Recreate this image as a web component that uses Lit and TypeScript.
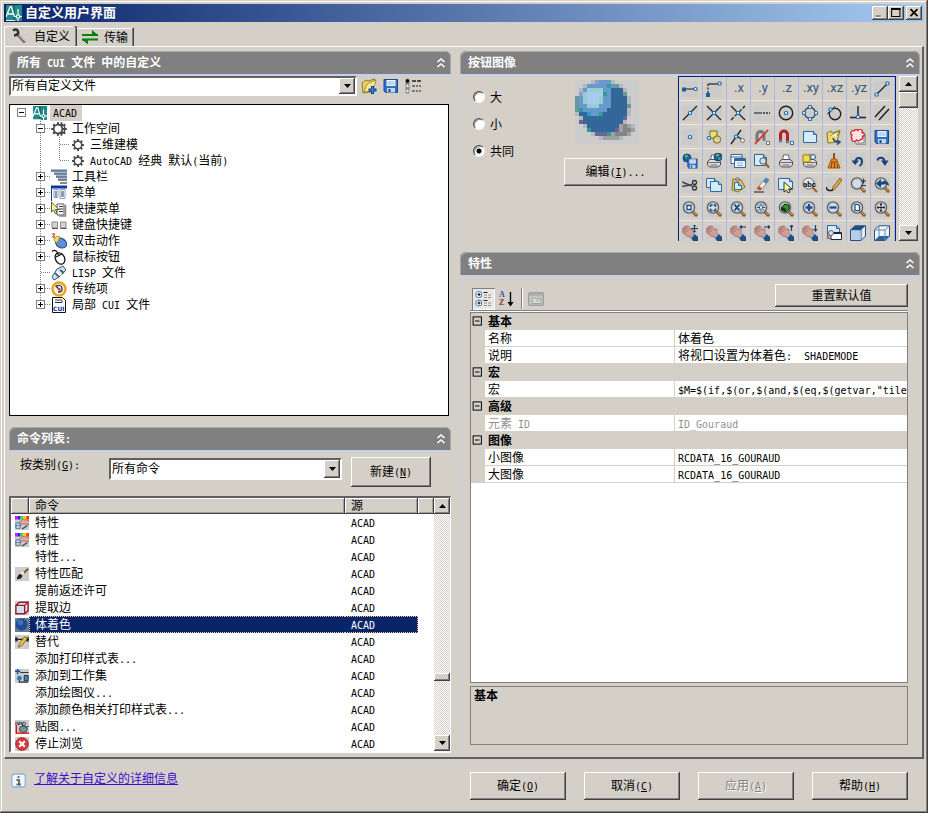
import { LitElement, html, svg, css, nothing } from "lit";
import { customElement, state } from "lit/decorators.js";
import { classMap } from "lit/directives/class-map.js";
import { styleMap } from "lit/directives/style-map.js";

/* ---------- text: Latin runs are set in a half-width monospace face ---------- */
const t = (s: string) =>
  html`<span class="t">${s.split(/([\x20-\x7e]+)/).map((p, i) => (i % 2 ? html`<span class="a">${p}</span>` : p))}</span>`;
const accel = (s: string, key: string, tail = "") =>
  html`<span class="t">${s}<span class="a">(<u>${key}</u>)${tail}</span></span>`;

/* ---------- icons ---------- */
const icon = (body: unknown, w = 16, cls = "") =>
  html`<svg class="ico ${cls}" width=${w} height=${w} viewBox="0 0 16 16" fill="none" aria-hidden="true">${body}</svg>`;

const node = (x: number, y: number) =>
  svg`<rect x=${x - 1.5} y=${y - 1.5} width="3" height="3" rx="1" fill="#fff" stroke="#1f6fb5" stroke-width="1.2"/>`;
const line = (d: string, c = "#222", w = 1.3, dash = "none") =>
  svg`<path d=${d} stroke=${c} stroke-width=${w} stroke-dasharray=${dash}/>`;
const sheet = (x: number, y: number, w: number, h: number) =>
  svg`<path d="M${x} ${y}h${w - 3}l3 3v${h - 3}h${-w}z" fill="#d4ecf8" stroke="#336699"/><path d="M${x + w - 3} ${y}v3h3" stroke="#336699" fill="#8fc4dd"/>`;
const lens = (body: unknown) => svg`
  <path d="M10.5 10.5L15 15" stroke="#6b3a10" stroke-width="2.6"/><path d="M10.3 10L14.6 14.3" stroke="#e0a050" stroke-width="1.2"/>
  <circle cx="7" cy="6.5" r="5.6" fill="#d3dbe4" stroke="#5a5a5a" stroke-width="1.3"/>
  <circle cx="7" cy="6.5" r="4.4" stroke="#aebccb" stroke-width=".8"/>${body}`;
const hand = (arrow: string) => svg`
  <path d="M1.5 7L6 10.5M1.2 4.5L7 9M3 2.5L8 7.5M5.5 2L10 7.5M10 5v4" stroke="#8e5a56" stroke-width="2.6" stroke-linecap="round"/>
  <ellipse cx="8" cy="9" rx="4" ry="2.8" transform="rotate(40 8 9)" fill="#cf9a90" stroke="#8e5a56" stroke-width=".6"/>
  <path d="M1.5 7L6 10.5M1.2 4.5L7 9M3 2.5L8 7.5M5.5 2L10 7.5M10 5v4" stroke="#d8a298" stroke-width="1.5" stroke-linecap="round"/>
  <path d="M9.5 13.2l3.2-4 3.3 3.2V16h-4.5z" fill="#1d4f88" stroke="#12335e" stroke-width=".6"/><path d="M9.2 12.8l3.2-3.9" stroke="#7fa9d4" stroke-width="1.2"/>
  <path d=${arrow} stroke="#223a66" stroke-width="1.1"/>`;
const disk = svg`<path d="M1 1.5h13.5v13H2.5L1 13z" fill="#2f6fc4" stroke="#1b4a90"/><path d="M3.5 2h9v6h-9z" fill="#eef4fb"/><path d="M4.5 4h7M4.5 6h7" stroke="#7aa6d8" stroke-width=".8"/><path d="M4 10h8v4.5H4z" fill="#c6d6ea"/><path d="M5.5 11h2v3h-2z" fill="#1b4a90"/>`;
const globe = (x: number, y: number) => svg`<circle cx=${x} cy=${y} r="4" fill="#1c5f9e" stroke="#0f3a66" stroke-width=".8"/><path d="M${x - 2.5} ${y - 2}l2-1.3 2 .8-1 1.6-2 .8zM${x} ${y + 1}l2-.6 1 .8-1.6 2z" fill="#5cb56a"/>`;
const printer = svg`<path d="M4.5 7l1-5h5l1 5" fill="#fff" stroke="#556" stroke-width=".9"/><path d="M1.5 8.5L4 6.5h8l2.5 2V12L12 14H4l-2.5-2z" fill="#dcdcdc" stroke="#505058"/><path d="M2 9.5h12M4.5 12h7" stroke="#6a6a70"/>`;
const teeth = "M8 1.2v13.6M1.2 8h13.6M3.2 3.2l9.6 9.6M12.8 3.2l-9.6 9.6";
const gear = svg`<path d=${teeth} stroke="#4a4a4a" stroke-width="2.2"/><circle cx="8" cy="8" r="4.3" fill="#fff" stroke="#4a4a4a" stroke-width="1.8"/>`;
const logo = svg`<path d="M0 0h16v16H0z" fill="#1f8a86"/><path d="M7 0h2v16H7z" fill="#0b4a4a" opacity=".5"/><path d="M0 12L4 2h1.5l3 10M2 9h6" stroke="#fff" stroke-width="1.3"/><path d="M12 4v12M8 11.5h8" stroke="#fff" stroke-width="1.2"/><path d="M10.5 10h3v3h-3z" fill="#1f8a86" stroke="#fff"/><path d="M0 15.5h9" stroke="#e8f4f4"/>`;
const chevrons = svg`<path d="M4.5 7L8 4l3.5 3M4.5 12L8 9l3.5 3" stroke="#fff" stroke-width="1.6"/>`;
const arrowUp = html`<svg width="7" height="4" viewBox="0 0 7 4" aria-hidden="true"><path d="M0 4L3.5 0 7 4z" fill="#000"/></svg>`;
const arrowDown = html`<svg width="7" height="4" viewBox="0 0 7 4" aria-hidden="true"><path d="M0 0h7L3.5 4z" fill="#000"/></svg>`;

const docBlue = sheet(1.5, 2.5, 13, 11);
const palette: [string, unknown][] = [
  ["临时追踪点", svg`${line("M2 8h10", "#555", 1.5)}<path d="M0 6.5h4v4H0z" fill="#1f5f95"/>${node(13.5, 8)}`],
  ["捕捉自", svg`${line("M2 3h10", "#444", 1.5)}${line("M2 3v10", "#444", 1.5, "2 1.5")}<path d="M0 12h4v4H0z" fill="#1f5f95"/>${node(13.5, 2.5)}`],
  [".x", null], [".y", null], [".z", null], [".xy", null], [".xz", null], [".yz", null],
  ["端点", svg`${line("M3 13L13 3")}${node(2.5, 13.5)}${node(13.5, 2.5)}`],
  ["中点", svg`${line("M1 15L15 1")}${node(8, 8)}`],
  ["交点", svg`${line("M1 1l14 14M1 15L15 1")}${node(8, 8)}`],
  ["外观交点", svg`${line("M1 1l14 14")}${line("M1 15L15 1", "#222", 1.3, "4 1.5")}${node(8, 8)}`],
  ["延长线", svg`${line("M0 8h8", "#555", 1.5)}${line("M9 8h7", "#333", 1.3, "2 1")}`],
  ["圆心", svg`<circle cx="8" cy="8" r="6.7" stroke="#222" stroke-width="1.4"/>${node(8, 8)}`],
  ["象限点", svg`<circle cx="8" cy="8" r="5.5" stroke="#333" stroke-width="1.3"/>${node(8, 2)}${node(8, 14)}${node(2, 8)}${node(14, 8)}`],
  ["切点", svg`<circle cx="9" cy="9" r="5.7" stroke="#222" stroke-width="1.4"/>${line("M1 9L9 1", "#444", 1)}${node(4.5, 4.5)}`],
  ["垂足", svg`${line("M0 12.5h16M8 1v11", "#222", 1.4)}${node(8, 12)}`],
  ["平行", svg`${line("M1 12L11 1M5 15L15 4", "#222", 1.5)}`],
  ["节点", svg`${node(8, 8)}`],
  ["插入点", svg`<path d="M4 2h7v7H4z" fill="#f0dc78" stroke="#7a6a20"/><circle cx="11" cy="10.5" r="3.7" stroke="#7a6a20" fill="#ead27a" fill-opacity=".7"/>${node(3, 9)}`],
  ["最近点", svg`${line("M1 15L11 1M7 7l4 3")}${node(6, 7.5)}<circle cx="12.5" cy="11.5" r="2" fill="#eee" stroke="#777"/>`],
  ["无捕捉", svg`<path d="M3 13V6a3.5 3.5 0 017 0v6" stroke="#777" stroke-width="2.8"/><path d="M1 15L14 1" stroke="#d9341c" stroke-width="1.7"/><path d="M12.5 12.5h3v3h-3z" fill="#fff" stroke="#555" stroke-width=".8"/>`],
  ["对象捕捉设置", svg`<path d="M2.5 11V5.5a3.5 3.5 0 017 0V13" stroke="#b5202c" stroke-width="3"/><path d="M1 12h3M8 13h3" stroke="#777" stroke-width="2.5"/><path d="M12.5 12.5h3v3h-3z" fill="#fff" stroke="#1f6fb5"/>`],
  ["新建", docBlue],
  ["打开", svg`<path d="M1 4l4-2 1 2 8-2.5L11 13 2 14z" fill="#f1d976" stroke="#8a7420"/><path d="M4 7l9-5-2 5" fill="#fff5c8" stroke="#8a7420" stroke-width=".8"/><path d="M7 9q1 4 6 4M11 11l3 2-3 2.5" stroke="#1b4a80" stroke-width="1.5"/>`],
  ["修订云线", svg`<path d="M5 4h9v10H5z" fill="#eee" stroke="#888"/><path d="M6 5.5h9.5v10H6" stroke="#888" stroke-width=".8"/><path d="M2 9a2 2 0 010-3 2.2 2.2 0 012-4 2.3 2.3 0 014-.5 2.2 2.2 0 014 2 2 2 0 01.5 4 2 2 0 01-2 3 2.5 2.5 0 01-4 .5A2.2 2.2 0 012 9z" fill="#fbe3e3" stroke="#d6262e" stroke-width="1.3"/>`],
  ["保存", disk],
  ["网上发布", svg`${globe(5, 5)}<g transform="translate(5 5) scale(.7)">${disk}</g>`],
  ["发布到网站", svg`${printer}${globe(12, 4)}`],
  ["图纸集", svg`<path d="M1 1.5h11v9H1zM1 4h11" fill="#fff" stroke="#336699"/><path d="M4.5 5.5h11v9h-11z" fill="#eef6fb" stroke="#336699"/><path d="M4.5 7h11" stroke="#336699" stroke-width="2"/><path d="M7 10h6M7 12.5h6" stroke="#8ab"/>`],
  ["打印预览", svg`${sheet(0.5, 1.5, 12, 11)}<circle cx="9" cy="8" r="3.2" fill="#cfe3f3" stroke="#555"/><path d="M11.5 10.5l3.5 4" stroke="#a65a20" stroke-width="2"/>`],
  ["打印", printer],
  ["批处理打印", svg`${printer}<path d="M1 2h7v7H1z" fill="#f2dc4e" stroke="#96801a"/><circle cx="11" cy="4" r="2.5" fill="#d8eef8" stroke="#357"/>`],
  ["清理", svg`<path d="M8 0v6" stroke="#8a5420" stroke-width="2"/><path d="M5.5 6h5l3.5 9H2z" fill="#e88c28" stroke="#a8540c"/><path d="M5 9h6M6 10l-1 5M8.5 10v5M11 11l1 4" stroke="#7a2c08" stroke-width=".9"/>`],
  ["放弃", svg`<path d="M5.5 8.5C6 3.5 12 4 12 8.5q0 3-2.5 4.5" stroke="#1f3f78" stroke-width="1.9"/><path d="M1.5 7.5H9L5 12z" fill="#1f3f78"/>`],
  ["重做", svg`<path d="M10.5 8.5C10 3.5 4 4 3.5 7.5" stroke="#1f3f78" stroke-width="1.9"/><path d="M14.5 7.5H7L11 13z" fill="#1f3f78"/>`],
  ["剪切", svg`${line("M0 5l10 4M0 9.5l10-2", "#444", 1.5)}<circle cx="12.5" cy="5.5" r="2" stroke="#333" stroke-width="1.3"/><circle cx="12.5" cy="11" r="2" stroke="#333" stroke-width="1.3"/>`],
  ["复制", svg`${sheet(0.5, 1.5, 11, 9)}${sheet(4.5, 4.5, 11, 10)}`],
  ["粘贴", svg`<path d="M3 2l8 1 4 7-7 5-6-2z" fill="#e8c860" stroke="#8a6c1c"/>${sheet(4.5, 5.5, 7, 7)}<path d="M6 1h3v3H6z" fill="#bbb" stroke="#666" stroke-width=".7"/>`],
  ["删除", svg`<path d="M4 10L12 1l3 2-7 9z" fill="#f3eecf" stroke="#777" stroke-width=".8"/><path d="M9 4.5L12 1l3 2-3 3.7z" fill="#4a84c0"/><path d="M2.5 11.5L5 9l3 2.5-2 2z" fill="#d3423c"/><path d="M0 15h10" stroke="#222"/>`],
  ["选择", svg`${sheet(0.5, 1.5, 14, 11)}<path d="M6 5v10l2.5-2 1.5 3 2-1-1.5-3H14z" fill="#fbf7b0" stroke="#222" stroke-width=".9"/>`],
  ["查找", svg`<circle cx="6.5" cy="6.5" r="5.5" fill="#e4e8ec" stroke="#666"/><path d="M10.5 10.5L15 15" stroke="#a65a20" stroke-width="2"/><text x="1" y="9.5" font-family="Roboto" font-weight="700" font-size="8" fill="#111">abc</text>`],
  ["编辑", svg`<path d="M7 10L14 1l2 2-7 9-3 1z" fill="#e5a83c" stroke="#7b4a10" stroke-width=".8"/><path d="M0 10q1 5 7 3" stroke="#222" stroke-width="1.5"/>`],
  ["实时缩放", svg`${lens(nothing)}<path d="M11 4h5M13.5 1.5v5M11 8.5h5" stroke="#223a66" stroke-width="1.2"/>`],
  ["缩放上一个", svg`${lens(nothing)}<path d="M15 9c0-5-4-6-8-4V2L2 6.5 7 11V8c3-1 6-1 8 1z" fill="#1f4a7c"/>`],
  ["窗口缩放", lens(svg`<path d="M5 4.5h4v4H5z" fill="#fff" stroke="#1f4a7c" stroke-width="1.3"/>`)],
  ["动态缩放", lens(svg`<path d="M4.5 6V4h2M7.5 4h2v2M9.5 7.5v2h-2M6.5 9.5h-2v-2" stroke="#1f4a7c" stroke-width="1.3"/>`)],
  ["比例缩放", lens(svg`<path d="M4.5 3.5l5 6M9.5 3.5l-5 6" stroke="#1f4a7c" stroke-width="1.9"/>`)],
  ["中心缩放", lens(svg`<path d="M7 2.5v8M3 6.5h8M4 3.5l6 6M10 3.5l-6 6" stroke="#1f4a7c"/><path d="M6 5.5h2v2H6z" fill="#fff"/>`)],
  ["缩放对象", lens(svg`<path d="M3.5 6L7 3l4 1.5v4L7.5 11l-4-2z" fill="#2da02c" stroke="#111"/><path d="M7.5 7v4l-4-2V6z" fill="#0c3b10"/>`)],
  ["放大", lens(svg`<path d="M7 3v7M3.5 6.5h7" stroke="#1f4f90" stroke-width="2.3"/>`)],
  ["缩小", lens(svg`<path d="M3.5 6.5h7" stroke="#1f4f90" stroke-width="2.3"/>`)],
  ["全部缩放", lens(svg`<path d="M5 3.5h3l1.5 1.5v4.5H5z" fill="#fff" stroke="#1f4a7c" stroke-width="1.2"/>`)],
  ["范围缩放", lens(svg`<path d="M7 2.5v8M3 6.5h8M6 4l1-1.5L8 4M6 9l1 1.5L8 9M4.5 5.5l-1.5 1 1.5 1M9.5 5.5l1.5 1-1.5 1" stroke="#222" stroke-width="1"/>`)],
  ["实时平移", hand("M12.5 0v7M9 3.5h7M11.5 1l1-1 1 1M11.5 6l1 1 1-1")],
  ["平移", hand("")],
  ["左移", hand("M10 2h6M12 .5L10 2l2 1.5")],
  ["右移", hand("M10 2h6M14 .5L16 2l-2 1.5")],
  ["上移", hand("M13.5 0v6M12 2l1.5-2L15 2")],
  ["下移", hand("M13.5 0v6M12 4l1.5 2L15 4")],
  ["命名视图", svg`${sheet(1.5, 0.5, 12, 13)}<path d="M5 7.5h10.5v7H5z" fill="#fff" stroke="#224"/><path d="M5 8h10" stroke="#224" stroke-width="2"/><circle cx="5" cy="8" r="2.5" stroke="#666" fill="#dde"/><path d="M3.5 10L1 13.5" stroke="#c07030" stroke-width="1.6"/>`],
  ["俯视", svg`<path d="M.5 5L5 .8h10.5V11L11 15.5H.5z" fill="#e4eefa" stroke="#26508c"/><path d="M.5 5L5 .8h10.5L11 5z" fill="#1f4f80"/><path d="M11 5v10M.5 5H11" stroke="#26508c"/><path d="M1 5.5h9.5v9.5H1z" fill="#b7cdea"/>`],
  ["仰视", svg`<path d="M.5 5L5 .8h10.5V11L11 15.5H.5z" fill="#f3f7fc" stroke="#26508c"/><path d="M.5 15.5L5 11h10.5L11 15.5z" fill="#2f639c"/><path d="M11 5v10M.5 5H11L15.5 1M5 1v10" stroke="#5b86bb"/>`],
];

const wrench = svg`<path d="M7 7l7 7.5" stroke="#777" stroke-width="3"/><path d="M8 7l6.5 6.5" stroke="#ccc"/><path d="M2 2.5Q6 0 7 3.5T3 7.5" stroke="#333" stroke-width="2.6"/>`;
const swap = svg`<path d="M0 6h16M0 10.5h16" stroke="#0a7d12" stroke-width="2"/><path d="M10 1l6 5h-6zM6 15.5L0 10.5h6z" fill="#0a7d12"/>`;
const tree = {
  workspaces: svg`<g transform="translate(4 0) scale(.8 1)">${gear}</g><g transform="translate(-1 0)">${gear}</g>`,
  toolbars: svg`<path d="M0 2h16M3 5h13M5 8h11M7 11h9M9 14h7" stroke="#8a8a8a" stroke-width="2"/><path d="M0 1h16M3 4h13M5 7h11M7 10h9" stroke="#3a76b8"/>`,
  menus: svg`<path d="M0 2h16" stroke="#0a3a9c" stroke-width="3"/><path d="M.5 3v13" stroke="#0a3a9c"/><path d="M3 4.5h4v8H3zM9 4.5h5v9H9z" fill="#fff" stroke="#8aa0c8"/><path d="M4 7h2M4 9h2M4 11h2M10 7h3M10 9h3M10 11h3" stroke="#334"/>`,
  shortcut: svg`<path d="M6 3h7v11H6z" fill="#fff" stroke="#555"/><path d="M8 5.5h4M8 8h4M8 10.5h4" stroke="#333"/><path d="M14.5 4v11H8" stroke="#888" stroke-width="1.5"/><path d="M.5 1v10l2.2-2 1.5 3.5 1.8-.8L4.5 8.5H8z" fill="#fbf58a" stroke="#333" stroke-width=".8"/>`,
  keys: svg`<path d="M1 5h5.5v6H1zM9.5 5H15v6H9.5z" fill="#d4d4d4" stroke="#888"/><path d="M1 11.5h6M9.5 11.5h6" stroke="#555"/>`,
  dbl: svg`<ellipse cx="10" cy="10" rx="6" ry="4.6" transform="rotate(35 10 10)" fill="#5e8fd8" stroke="#27468c"/><path d="M3 5q3-3 6-1l-3 6q-3-1-3-5z" fill="#f5e44a" stroke="#8a7c18" stroke-width=".7"/><path d="M1 1h3L1.5 4H4" stroke="#c22"/>`,
  mouse: svg`<ellipse cx="9" cy="9.5" rx="4.5" ry="6" transform="rotate(-28 9 9.5)" fill="#fff" stroke="#111" stroke-width="1.3"/><path d="M5 8l6-3M7.5 6l-1.5-3Q4 0 1 2.5" stroke="#111" stroke-width="1.2"/>`,
  lisp: svg`<path d="M6 4l6-3 3 4-7 7-5 3-2-3z" fill="#cfe3ef" stroke="#33566e"/><path d="M9 5l4 3M4 8l4 4" stroke="#33566e" stroke-width="1.6"/><path d="M6 7l4 3" stroke="#fff" stroke-width="2"/>`,
  legacy: svg`<circle cx="8" cy="8" r="6.5" fill="#f6f6f0" stroke="#eea020" stroke-width="2.4"/><path d="M5 5q5-2 6 2t-4 4M8 8L4.5 5" stroke="#333" stroke-width="1.3"/><path d="M7 7h2.5v2.5H7z" fill="#c33"/>`,
  partial: svg`<path d="M1.5.5h10l3 3v12h-13z" fill="#fff" stroke="#111"/><path d="M4 3h7M4 5.5h7v-2" stroke="#333"/><text x="2" y="14" font-family="DejaVu Sans" font-weight="700" font-size="6" fill="#0a2aa0">CUI</text>`,
};
const cmdIcons: Record<string, unknown> = {
  props: svg`<path d="M0 0h16v16H0z" fill="#ccc"/><path d="M0 0h3v4H0z" fill="#e0f"/><path d="M3 0h3v4H3z" fill="#22f"/><path d="M6 0h3v4H6z" fill="#2c8"/><path d="M9 0h4v4H9z" fill="#fc0"/><path d="M13 0h3v4h-3z" fill="#f30"/><path d="M4 8l5-4 7 1v5l-6-1-5 1z" fill="#e8a89c" stroke="#9c5a55" stroke-width=".8"/><path d="M1 8h5v6H1zM1 11h5" stroke="#336699" fill="#dde8f2"/><path d="M8 15l6-4" stroke="#555" stroke-width="1.5"/>`,
  match: svg`<path d="M0 0h16v16H0z" fill="#ccc"/><path d="M9 8l6-6" stroke="#8a5a2a" stroke-width="2.5"/><path d="M7 9l3-3" stroke="#eee" stroke-width="3"/><path d="M2 14q1-6 5-6l1.5 2Q8 14 2 14z" fill="#222"/>`,
  edges: svg`<path d="M0 0h16v16H0z" fill="#ccc"/><path d="M1 5l4-3.5h10V11l-4 3.5H1z" fill="#cfe2f6" stroke="#a01820" stroke-width="1.6"/><path d="M1 5h10v9M11 5l4-3.5" stroke="#a01820" stroke-width="1.5"/>`,
  shade: svg`<path d="M0 0h16v16H0z" fill="#6a78a0"/><circle cx="7.5" cy="7.5" r="6.8" fill="#1f4c92"/><circle cx="6" cy="5" r="3.2" fill="#4070b8"/>`,
  override: svg`<path d="M0 0h16v16H0z" fill="#ccc"/><path d="M0 5h16M1 2v6M15 2v6M3 3L1 5l2 2M13 3l2 2-2 2" stroke="#222" stroke-width="1.2"/><path d="M4 14l1-4 6-8 3 2-6 8z" fill="#f0c840" stroke="#6a4a10" stroke-width=".9"/>`,
  workset: svg`<path d="M0 0h16v16H0z" fill="#ccc"/><path d="M0 2.5h6M3 0v6" stroke="#1f4f90" stroke-width="1.7"/><path d="M6 4h9.5M5 12v3h10" stroke="#333" stroke-width="1.3"/><circle cx="5" cy="10.5" r="2.7" fill="#2f7ac0"/><path d="M10.5 7.5h4.5v6h-4.5z" fill="#3c88d0" stroke="#123"/>`,
  map: svg`<path d="M0 0h16v16H0z" fill="#ccc"/><ellipse cx="9.5" cy="10.5" rx="4.5" ry="3.8" fill="#6c9a8c" stroke="#345"/><path d="M12 9l3.5-2M8 6.5h3" stroke="#345" stroke-width="1.3"/><path d="M1.5 6v9H16" stroke="#e00" stroke-width="1.5"/><text x="0" y="5.5" font-family="DejaVu Sans" font-weight="700" font-size="5" fill="#111">(UV)</text>`,
  stop: svg`<path d="M0 0h16v16H0z" fill="#ccc"/><circle cx="8" cy="8" r="7.3" fill="#d83c3c" stroke="#a01818" stroke-width=".8"/><path d="M4.8 4.8l6.4 6.4M11.2 4.8l-6.4 6.4" stroke="#fff" stroke-width="2.3"/>`,
};

/* Enlarged 16 x 16 preview of the shading command image */
const ballColors: Record<string, string> = {
  g: "#b4b8bc", v: "#9999cc", M: "#6699cc", L: "#99cccc", P: "#a6caf0", D: "#336699",
  T: "#339999", t: "#669999", B: "#3399cc", V: "#666699", s: "#a0a0a0", S: "#858585",
};
const ballRows = [
  "....gvMMMg......", "..gMMMMMTMtg....", ".gMLLLLMMDDDg...", ".vLPPPPTMDDDt...",
  "tMLPPPLMMDDDDg..", "tMLPPPLMMDDDDg..", "tMMLLLMMMDDDDt..", "tTMMMMMMDDDDDg..",
  "gDDBMMTDDDDDDg..", ".gDDDDDDDDDDV...", ".VDDDDDDDDDDg...", "..gDDDDDDDDsSsg.",
  "...TDDDDDDVsSSs.", "....gVVVTsSSSs..", "......gssssg....", "................",
];
const ball = html`<svg class="ball" width="64" height="64" viewBox="0 0 16 16" shape-rendering="crispEdges" role="img" aria-label="体着色">
  ${ballRows.map((r, y) => [...r].map((c, x) => (c === "." ? nothing : svg`<rect x=${x} y=${y} width="1" height="1" fill=${ballColors[c]}/>`)))}</svg>`;

interface TreeItem { label: string; icon: unknown; depth: number; box: string; last?: boolean }
const treeItems: TreeItem[] = [
  { label: "ACAD", icon: logo, depth: 0, box: "-" },
  { label: "工作空间", icon: tree.workspaces, depth: 1, box: "-" },
  { label: "三维建模", icon: gear, depth: 2, box: "" },
  { label: "AutoCAD 经典 默认(当前)", icon: gear, depth: 2, box: "", last: true },
  { label: "工具栏", icon: tree.toolbars, depth: 1, box: "+" },
  { label: "菜单", icon: tree.menus, depth: 1, box: "+" },
  { label: "快捷菜单", icon: tree.shortcut, depth: 1, box: "+" },
  { label: "键盘快捷键", icon: tree.keys, depth: 1, box: "+" },
  { label: "双击动作", icon: tree.dbl, depth: 1, box: "+" },
  { label: "鼠标按钮", icon: tree.mouse, depth: 1, box: "+" },
  { label: "LISP 文件", icon: tree.lisp, depth: 1, box: "" },
  { label: "传统项", icon: tree.legacy, depth: 1, box: "+" },
  { label: "局部 CUI 文件", icon: tree.partial, depth: 1, box: "+", last: true },
];
const expander = (x: number, sign: string) => svg`<rect x=${x + 0.5} y="3.5" width="8" height="8" fill="#fff" stroke="#808080"/>
  <path d=${sign === "+" ? `M${x + 2} 7.5h5M${x + 4.5} 5v5` : `M${x + 2} 7.5h5`} stroke="#000"/>`;
const guide = (it: TreeItem) => {
  const dots = (d: string) => svg`<path d=${d} stroke="#808080" stroke-dasharray="1 1"/>`;
  const w = [23, 41, 61][it.depth];
  return html`<svg class="guide" width=${w} height="16" viewBox="0 0 ${w} 16" fill="none" aria-hidden="true">
    ${it.depth === 0 ? expander(7, it.box) : nothing}
    ${it.depth === 1 ? svg`${dots(it.last ? "M30.5 0v8" : "M30.5 0v16")}${dots("M31 7.5h10")}${it.box ? expander(26, it.box) : nothing}` : nothing}
    ${it.depth === 2 ? svg`${dots("M30.5 0v16")}${dots(it.last ? "M49.5 0v8" : "M49.5 0v16")}${dots("M50 7.5h10")}` : nothing}
  </svg>`;
};

const commands: [string, string][] = [
  ["特性", "props"], ["特性", "props"], ["特性...", ""], ["特性匹配", "match"], ["提前返还许可", ""],
  ["提取边", "edges"], ["体着色", "shade"], ["替代", "override"], ["添加打印样式表...", ""],
  ["添加到工作集", "workset"], ["添加绘图仪...", ""], ["添加颜色相关打印样式表...", ""], ["贴图...", "map"], ["停止浏览", "stop"],
];
const groups: { name: string; rows: [string, string, boolean?][] }[] = [
  { name: "基本", rows: [["名称", "体着色"], ["说明", "将视口设置为体着色:  SHADEMODE"]] },
  { name: "宏", rows: [["宏", '$M=$(if,$(or,$(and,$(eq,$(getvar,"tilemode"),0)']] },
  { name: "高级", rows: [["元素 ID", "ID_Gouraud", true]] },
  { name: "图像", rows: [["小图像", "RCDATA_16_GOURAUD"], ["大图像", "RCDATA_16_GOURAUD"]] },
];

@customElement("app-root")
export class AppRoot extends LitElement {
  @state() private selected = 6;
  @state() private size = "共同";

  static styles = css`
    :host {
      display: block;
      font: 12px/16px "Noto Sans CJK SC", sans-serif;
      color: #000;
      --face: #d4d0c8;
    }
    * { box-sizing: border-box; }
    button, select, input { font: inherit; color: inherit; margin: 0; border-radius: 0; }
    .a { font-family: "DejaVu Sans Mono", monospace; font-size: 10px; line-height: 0; white-space: pre; }
    .t { white-space: pre; }
    .ico { display: block; flex: none; }

    .window {
      display: flex; flex-direction: column; min-height: 100vh; padding: 4px; background: var(--face);
      box-shadow: inset -1px -1px #404040, inset 1px 1px #d4d0c8, inset -2px -2px #808080, inset 2px 2px #fff;
    }
    .raised, .push {
      appearance: none; border: 0; padding: 0; background: var(--face);
      box-shadow: inset -1px -1px #404040, inset 1px 1px #fff, inset -2px -2px #808080;
      display: flex; align-items: center; justify-content: center;
    }
    .push { height: 28px; padding-bottom: 2px; }
    .push:disabled { color: #808080; text-shadow: 1px 1px #fff; }

    .titlebar {
      display: flex; align-items: center; height: 18px; padding: 0 2px; gap: 3px;
      background: linear-gradient(90deg, #0a246a, #a6caf0); color: #fff;
    }
    .titlebar h1 { flex: 1; margin: 0; font-size: 13px; line-height: 16px; padding-bottom: 2px; font-weight: 700; }
    .caption { display: flex; }
    .caption .raised { width: 16px; height: 14px; }
    .caption .close { margin-left: 2px; }

    .tabs { display: flex; align-items: flex-end; height: 24px; }
    .tab {
      appearance: none; border: 0; background: var(--face); display: flex; align-items: center; gap: 6px;
      height: 18px; padding: 0 6px 0 5px; box-shadow: inset -1px 0 #404040, inset -2px 0 #808080, inset 0 1px #fff;
    }
    .tab.on {
      height: 21px; padding: 0 7px 2px 7px; gap: 7px; border-radius: 2px 2px 0 0; margin-bottom: -1px;
      box-shadow: inset -1px 0 #404040, inset -2px 0 #808080, inset 1px 1px #fff;
    }
    .page {
      flex: 1; display: grid; grid-template-columns: minmax(0, 442fr) minmax(0, 460fr); gap: 9px;
      border: solid; border-width: 1px 2px 2px 1px; border-color: #fff #606060 #606060 #fff;
      padding: 4px 2px 4px 4px;
    }
    .column { display: flex; flex-direction: column; }
    .head {
      display: flex; align-items: center; justify-content: space-between; height: 25px; padding: 0 2px 2px 8px;
      background: #808080; color: #fff; border-radius: 6px 6px 0 0;
      border-bottom: 2px solid #c3cfec; box-shadow: inset 1px 1px #a8a8a4, inset -1px 0 #a8a8a4;
    }
    .head h2 { margin: 0; font-size: 12px; line-height: 16px; font-weight: 700; }
    .head button { appearance: none; border: 0; background: none; padding: 3px 0 0; }

    .combo { display: grid; background: #fff; border: 2px solid; border-color: #606060 #fff #fff #606060; height: 20px; }
    .combo > * { grid-area: 1 / 1; }
    .combo select { appearance: none; border: 0; background: none; padding: 0 18px 2px 1px; line-height: 14px; width: 100%; min-width: 0; }
    .combo .raised { width: 16px; justify-self: end; pointer-events: none; }
    .filebar { display: flex; align-items: center; gap: 4px; height: 20px; }
    .filebar .combo { flex: 1; }
    .filebar .tools { display: flex; gap: 6px; width: 90px; }
    .tools button { appearance: none; border: 0; background: none; padding: 0; }

    .tree { flex: 1; min-height: 240px; margin: 8px 2px 11px 0; padding: 0; background: #fff; border: 1px solid #000; list-style: none; }
    .tree li { display: flex; align-items: center; height: 16px; }
    .guide { display: block; }
    .tree .label { margin-left: 3px; padding: 0 2px; line-height: 14px; height: 16px; }
    .tree .root { background: var(--face); padding: 0 5px 0 3px; }

    .filter { display: flex; align-items: flex-start; gap: 9px; margin: 5px 20px 9px 11px; }
    .filter label { width: 80px; line-height: 14px; }
    .filter .combo { flex: 1; height: 22px; margin-top: 1px; }
    .filter .push { width: 80px; height: 30px; }

    .list { display: flex; height: 257px; background: #fff; border: 2px solid; border-color: #606060 #fff #fff #606060; border-right-width: 1px; }
    .list .view { flex: 1; min-width: 0; }
    table { border-collapse: separate; border-spacing: 0; table-layout: fixed; width: 100%; }
    td, th { padding: 0; text-align: left; font-weight: 400; white-space: nowrap; vertical-align: top; }
    .list th { height: 16px; line-height: 14px; padding-left: 6px; background: var(--face); box-shadow: inset -1px -1px #404040, inset 1px 1px #fff, inset -2px -2px #a0a0a0; }
    .list td { height: 17px; line-height: 15px; padding-left: 6px; }
    .list td.pic { padding-left: 4px; vertical-align: middle; }
    .w-pic { width: 18px; } .w-src { width: 73px; } .w-end { width: 16px; }
    .list .sel .name, .list .sel .src { background: #0a246a; color: #fff; line-height: 13px; border: dotted #f0d080; border-width: 1px 0; }
    .list .sel .name { border-left-width: 1px; padding-left: 5px; }
    .list .sel .src { border-right-width: 1px; }

    .scroll {
      display: flex; flex-direction: column; width: 16px; flex: none;
      background: repeating-conic-gradient(#fff 0 25%, #d4d0c8 0 50%) 0 0 / 2px 2px;
    }
    .scroll .raised { height: 16px; flex: none; }
    .scroll .thumb { height: 8px; }
    .scroll.wide { width: 19px; }
    .scroll.wide .thumb { height: 16px; }

    .right { border: solid #cbd1e0; border-width: 0 0 0 1px; padding-bottom: 8px; }
    .right .head { margin-left: -1px; }
    .image { display: flex; height: 165px; margin-bottom: 11px; padding-right: 2px; }
    fieldset { border: 0; margin: 0; padding: 11px 0 0 12px; flex: 1; min-width: 0; display: flex; flex-direction: column; gap: 7px; }
    fieldset label { display: flex; align-items: center; gap: 5px; height: 20px; line-height: 20px; }
    input[type="radio"] {
      appearance: none; width: 12px; height: 12px; border-radius: 6px; background: #fff;
      border: 1px solid; border-color: #505050 #f4f4f4 #f4f4f4 #505050; box-shadow: inset 1px 1px #909090;
    }
    input[type="radio"]:checked { background: radial-gradient(circle, #000 0 2px, #fff 3px); }
    .preview { display: flex; flex-direction: column; width: 103px; margin-right: 11px; padding-top: 4px; gap: 14px; }
    .ball { display: block; margin-left: 11px; background: #ccc; }
    .palette { display: grid; grid-template-columns: repeat(9, 24px); grid-auto-rows: 24px; border: 1px solid #0a1f7c; border-bottom: 0; overflow: hidden; margin-right: 3px; }
    .palette button { appearance: none; border: 0; padding: 0 0 0 3px; background: var(--face); box-shadow: inset -1px 0 #a8b8e4, inset 0 -1px #e6e6ea; display: flex; align-items: center; }
    .palette .ico { background: #cbcbcb; }
    .palette .axis { font: 13px/16px Roboto, sans-serif; color: #31567c; justify-content: center; padding: 0 0 2px; }

    .props { flex: 1; display: flex; flex-direction: column; padding: 0 12px 0 9px; }
    .toolbar { display: flex; align-items: flex-end; height: 34px; border-bottom: 1px solid #808080; box-shadow: 0 1px #fff; margin-bottom: 1px; padding-left: 2px; }
    .toolbar .tool { appearance: none; border: 0; background: none; width: 23px; height: 22px; padding: 3px; }
    .toolbar .tool.on { background: #e9e7e3; box-shadow: inset 1px 1px #808080, inset -1px -1px #fff; }
    .toolbar .sep { width: 2px; height: 21px; margin: 0 2px 1px 3px; background: linear-gradient(90deg, #808080 50%, #fff 50%); }
    .toolbar .push { align-self: flex-start; margin: 7px 0 0 auto; width: 133px; height: 23px; }
    .grid { flex: 1; min-height: 180px; background: #fff; border: 1px solid #808080; overflow: hidden; }
    .grid td, .grid th { height: 17px; line-height: 15px; padding-left: 3px; }
    .grid .edge { width: 14px; padding: 2px 0 0 1px; background: var(--face); }
    .grid .group { background: var(--face); font-weight: 700; }
    .grid .name { border: solid var(--face); border-width: 0 1px 1px 0; }
    .grid .value { border-bottom: 1px solid var(--face); }
    .grid .off { color: #909090; }
    .w-edge { width: 14px; } .w-name { width: 190px; }
    .about { height: 59px; margin-top: 3px; border: 1px solid #808080; padding: 0 3px; font-weight: 700; }

    .footer { display: flex; gap: 18px; padding: 13px 16px 9px 7px; }
    .footer .help { flex: 1; display: flex; align-items: flex-start; gap: 7px; }
    .footer .help a { color: #3c0cd0; line-height: 12px; }
    .footer .push { width: 96px; }
  `;

  private head(title: string) {
    return html`<div class="head"><h2>${t(title)}</h2><button aria-label="折叠 ${title}">${icon(chevrons)}</button></div>`;
  }

  private scrollbar(before: number, after: number, wide = false) {
    return html`<div class="scroll ${wide ? "wide" : ""}">
      <button class="raised" aria-label="向上滚动">${arrowUp}</button>
      <div style=${styleMap({ flex: String(before) })}></div>
      <div class="raised thumb"></div>
      <div style=${styleMap({ flex: String(after) })}></div>
      <button class="raised" aria-label="向下滚动">${arrowDown}</button>
    </div>`;
  }

  private combo(id: string, value: string, label = "") {
    return html`<div class="combo">
      <select id=${id} aria-label=${label || value}><option>${value}</option></select>
      <span class="raised">${arrowDown}</span>
    </div>`;
  }

  private left() {
    return html`<section class="column">
      ${this.head("所有 CUI 文件 中的自定义")}
      <div class="filebar">
        ${this.combo("files", "所有自定义文件")}
        <div class="tools">
          <button aria-label="加载局部自定义文件">${icon(svg`<path d="M1 5l4-3 2 1 7-2-1 4-2 9-9 1z" fill="#e9cf62" stroke="#96801f"/><path d="M3 14L6 6l9-4-3 11z" fill="#fae99a" stroke="#96801f" stroke-width=".8"/><path d="M11.5 8v8M7.5 12h8" stroke="#0d3f92" stroke-width="3"/><path d="M11.5 9v6M8.5 12h6" stroke="#3d8be0" stroke-width="1.2"/>`)}</button>
          <button aria-label="保存所有自定义文件">${icon(disk)}</button>
          <button aria-label="显示选项">${icon(svg`<rect x=".5" y=".5" width="4" height="15" rx="1.5" fill="#888"/><circle cx="2.5" cy="3" r="1.8" fill="#000"/><circle cx="2.5" cy="8" r="1.2" fill="#eee"/><circle cx="2.5" cy="13" r="1.2" fill="#eee"/><path d="M7 3h9" stroke="#222" stroke-width="1.6" stroke-dasharray="4 1"/><path d="M7 8h9M7 13h9" stroke="#777" stroke-width="1.8" stroke-dasharray="3 1 2 1"/>`)}</button>
        </div>
      </div>
      <ul class="tree" role="tree" aria-label="自定义">
        ${treeItems.map((it) => html`<li role="treeitem" aria-level=${it.depth + 1}>
          ${guide(it)}${icon(it.icon, it.depth === 1 ? 16 : 14)}
          <span class=${classMap({ label: true, root: it.depth === 0 })}>${t(it.label)}</span></li>`)}
      </ul>
      ${this.head("命令列表:")}
      <div class="filter">
        <label for="category">${accel("按类别", "G", ":")}</label>
        ${this.combo("category", "所有命令", "按类别")}
        <button class="push">${accel("新建", "N")}</button>
      </div>
      <div class="list">
        <div class="view">
          <table>
            <colgroup><col class="w-pic" /><col /><col class="w-src" /><col class="w-end" /></colgroup>
            <thead><tr><th></th><th>命令</th><th>源</th><th></th></tr></thead>
            <tbody>
              ${commands.map(([name, pic], i) => html`<tr class=${classMap({ sel: i === this.selected })} @click=${() => (this.selected = i)}>
                <td class="pic">${pic ? icon(cmdIcons[pic], 14) : nothing}</td>
                <td class="name">${t(name)}</td><td class="src">${t("ACAD")}</td><td></td></tr>`)}
            </tbody>
          </table>
        </div>
        ${this.scrollbar(159, 54)}
      </div>
    </section>`;
  }

  private right() {
    const sizes = ["大", "小", "共同"];
    return html`<section class="column right">
      ${this.head("按钮图像")}
      <div class="image">
        <fieldset aria-label="图像大小">
          ${sizes.map((s) => html`<label><input type="radio" name="size" .checked=${this.size === s} @change=${() => (this.size = s)} />${s}</label>`)}
        </fieldset>
        <div class="preview">${ball}<button class="push">${accel("编辑", "I", "...")}</button></div>
        <div class="palette">
          ${palette.map(([name, body]) => body === null
            ? html`<button class="axis">${name}</button>`
            : html`<button aria-label=${name}>${icon(body)}</button>`)}
        </div>
        ${this.scrollbar(0, 1, true)}
      </div>
      ${this.head("特性")}
      <div class="props">
        <div class="toolbar">
          <button class="tool on" aria-label="按分类">${icon(svg`<rect x="1" y=".8" width="5.5" height="5.5" rx="1.5" fill="#fff" stroke="#3a78b8"/><rect x="1" y="9.3" width="5.5" height="5.5" rx="1.5" fill="#fff" stroke="#3a78b8"/><path d="M2.5 3.5h3M4 2v3M2.5 12h3M4 10.5v3" stroke="#000"/><path d="M8.5 1.5h4M8.5 9.5h4" stroke="#222"/><path d="M9 4h7M9 6.5h7M9 12h7M9 14.5h7" stroke="#8a93a6" stroke-dasharray="3 1"/>`)}</button>
          <button class="tool" aria-label="按字母">${icon(svg`<text x="1" y="6" font-family="Liberation Serif" font-weight="700" font-size="8" fill="#2850b0">A</text><text x="1" y="14" font-family="Liberation Serif" font-weight="700" font-size="8" fill="#9c2c2c">Z</text><path d="M12.5 1v12" stroke="#000" stroke-width="1.4"/><path d="M9.5 11h6l-3 4.5z" fill="#000"/>`)}</button>
          <span class="sep"></span>
          <button class="tool" aria-label="属性页" disabled>${icon(svg`<rect x=".7" y="1.7" width="14.6" height="12.6" rx="1" fill="#c8c8c4" stroke="#a0a0a0" stroke-width="1.4"/><path d="M1 3.5h14" stroke="#aaa" stroke-width="2"/><path d="M4 7h3l1 1h5v4.5H4z" fill="#e4e4e0" stroke="#a0a0a0"/><path d="M5.5 10h1.5M8 10h3.5" stroke="#a0a0a0"/>`)}</button>
          <button class="push">重置默认值</button>
        </div>
        <div class="grid">
          <table>
            <colgroup><col class="w-edge" /><col class="w-name" /><col /></colgroup>
            ${groups.map((g) => html`<tbody>
              <tr><td class="edge">${icon(svg`<rect x="1.5" y="2.5" width="11" height="11" stroke="#000" stroke-width="1.3"/><path d="M4 8h6" stroke="#000" stroke-width="1.3"/>`, 12)}</td><th class="group" colspan="2">${g.name}</th></tr>
              ${g.rows.map(([k, v, off]) => html`<tr class=${classMap({ off: !!off })}><td class="edge"></td><th class="name">${t(k)}</th><td class="value">${t(v)}</td></tr>`)}
            </tbody>`)}
          </table>
        </div>
        <div class="about">基本</div>
      </div>
    </section>`;
  }

  render() {
    return html`<main class="window">
      <header class="titlebar">
        ${icon(logo)}
        <h1>自定义用户界面</h1>
        <div class="caption">
          <button class="raised" aria-label="最小化">${icon(svg`<path d="M3 12.5h7" stroke="#fff" stroke-width="2"/><path d="M3 11.5h6" stroke="#808080" stroke-width="2"/>`, 14)}</button>
          <button class="raised" aria-label="最大化">${icon(svg`<path d="M3 3h9.5v9H3z" stroke="#000" stroke-width="1.2"/><path d="M2.5 3.5h10.5" stroke="#000" stroke-width="2"/>`, 14)}</button>
          <button class="raised close" aria-label="关闭">${icon(svg`<path d="M4 3.5l8 8M12 3.5l-8 8" stroke="#000" stroke-width="2"/>`, 14)}</button>
        </div>
      </header>
      <nav class="tabs" role="tablist">
        <button class="tab on" role="tab" aria-selected="true">${icon(wrench)}自定义</button>
        <button class="tab" role="tab" aria-selected="false">${icon(swap)}传输</button>
      </nav>
      <div class="page">${this.left()}${this.right()}</div>
      <footer class="footer">
        <div class="help">
          ${icon(svg`<rect x=".8" y="2" width="13.5" height="13" rx="2.5" fill="#f2f6fa" stroke="#8ab4dc" stroke-width="1.3"/><path d="M7.5 4v2M5.5 8h2.5v4.5M5.5 12.5h4.5" stroke="#666" stroke-width="1.8"/>`)}
          <a href="#learn">了解关于自定义的详细信息</a>
        </div>
        <button class="push">${accel("确定", "O")}</button>
        <button class="push">${accel("取消", "C")}</button>
        <button class="push" disabled>${accel("应用", "A")}</button>
        <button class="push">${accel("帮助", "H")}</button>
      </footer>
    </main>`;
  }
}
